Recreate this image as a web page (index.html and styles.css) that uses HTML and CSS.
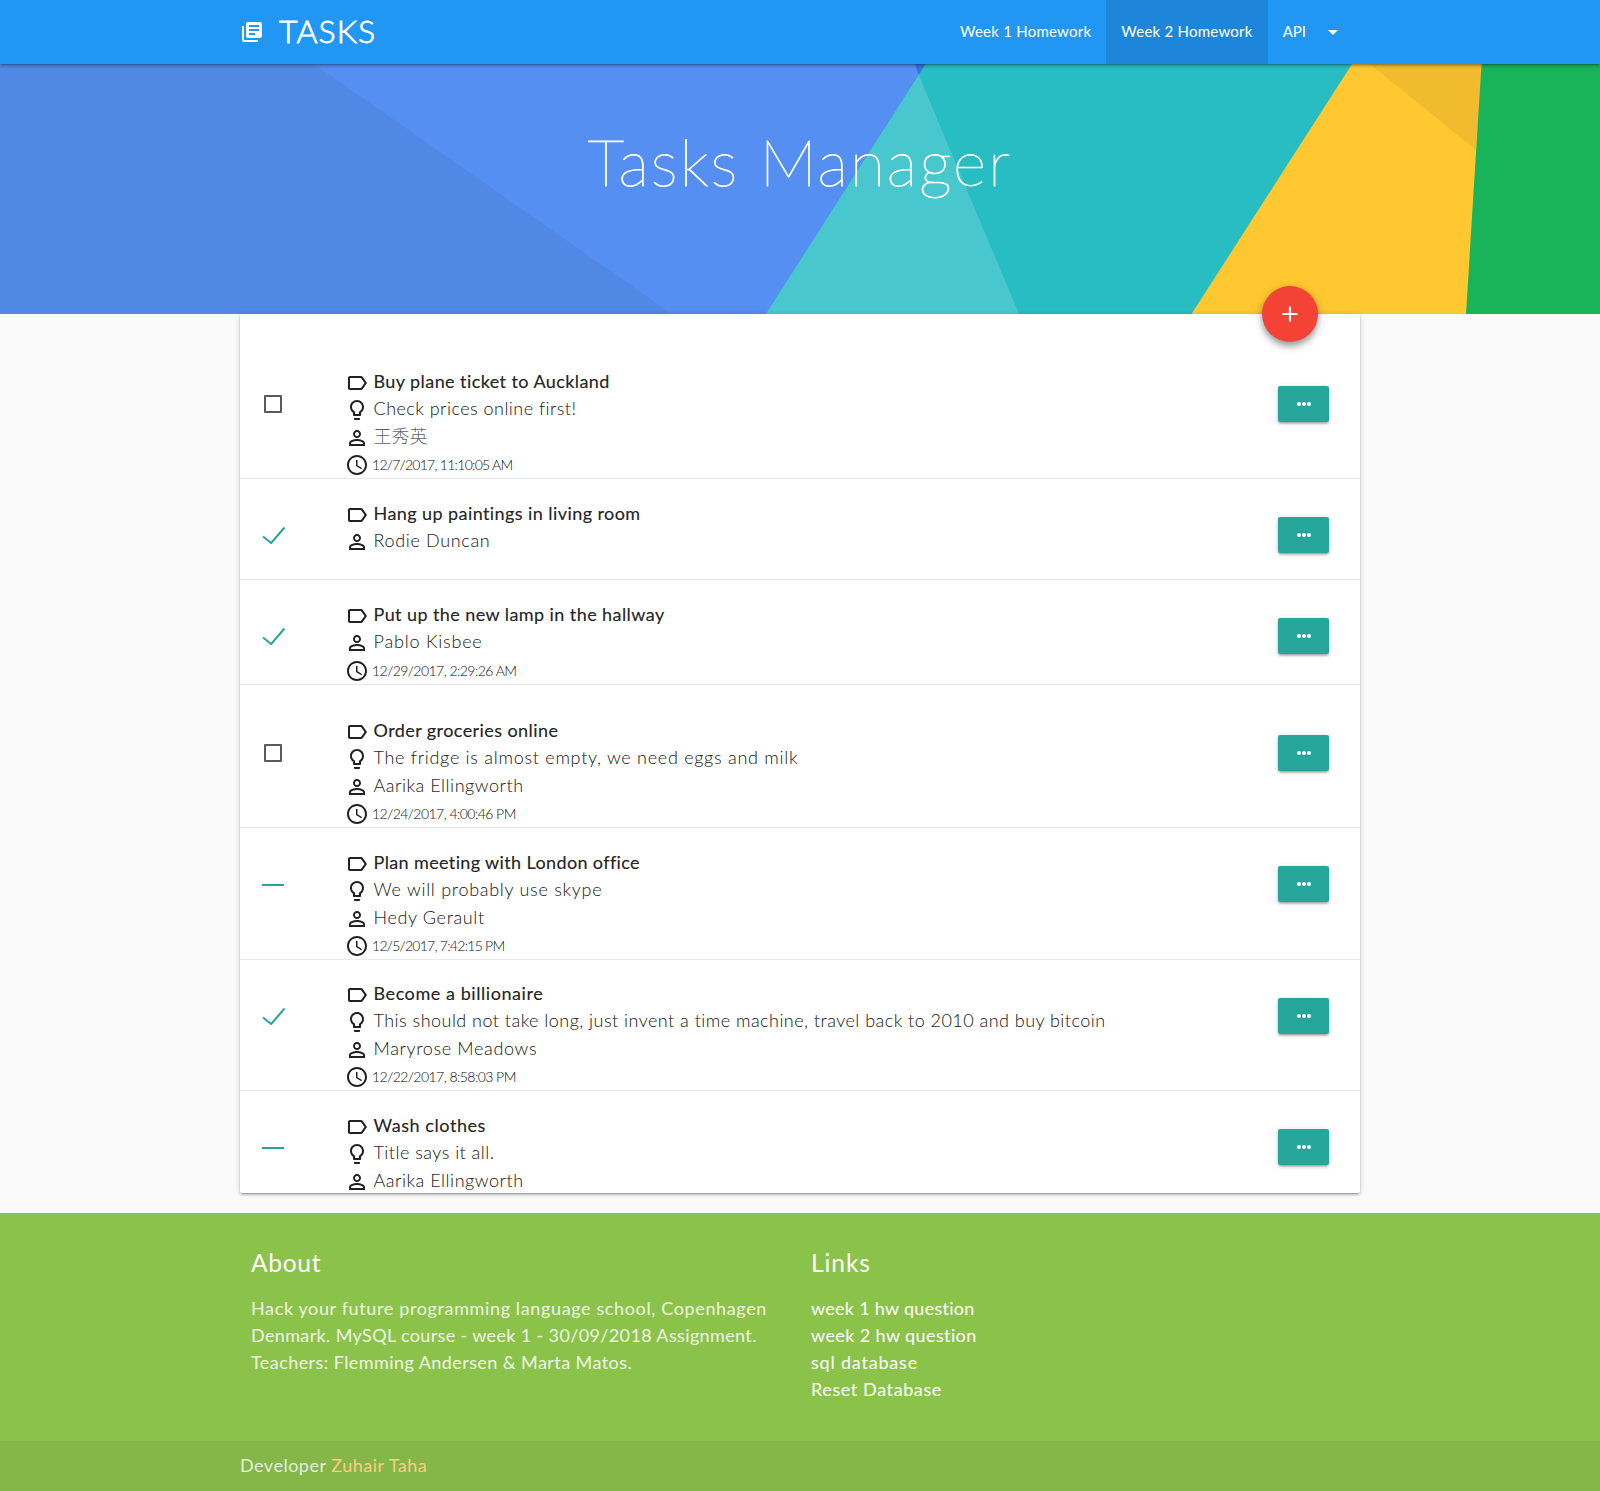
FILE: index.html
```html
<!DOCTYPE html>
<html lang="en">
<head>
<meta charset="utf-8">
<title>Tasks Manager</title>
<link rel="stylesheet" href="styles.css">
</head>
<body>
<svg class="defs" aria-hidden="true">
  <symbol id="label" viewBox="0 0 24 24"><path d="M17.63 5.84C17.27 5.33 16.67 5 16 5L5 5.01C3.9 5.01 3 5.9 3 7v10c0 1.1.9 1.99 2 1.99L16 19c.67 0 1.27-.33 1.63-.84L22 12l-4.37-6.16zM16 17H5V7h11l3.55 5L16 17z"/></symbol>
  <symbol id="bulb" viewBox="0 0 24 24"><path d="M9 21c0 .55.45 1 1 1h4c.55 0 1-.45 1-1v-1H9v1zm3-19C8.14 2 5 5.14 5 9c0 2.38 1.19 4.47 3 5.74V17c0 .55.45 1 1 1h6c.55 0 1-.45 1-1v-2.26c1.81-1.27 3-3.36 3-5.74 0-3.86-3.14-7-7-7zm2.85 11.1l-.85.6V16h-4v-2.3l-.85-.6C7.8 12.16 7 10.63 7 9c0-2.76 2.24-5 5-5s5 2.24 5 5c0 1.63-.8 3.16-2.15 4.1z"/></symbol>
  <symbol id="person" viewBox="0 0 24 24"><path d="M12 5.9c1.16 0 2.1.94 2.1 2.1s-.94 2.1-2.1 2.1S9.9 9.16 9.9 8s.94-2.1 2.1-2.1m0 9c2.97 0 6.1 1.46 6.1 2.1v1.1H5.900V17c0-.64 3.130-2.100 6.100-2.100M12 4C9.790 4 8 5.790 8 8s1.790 4 4 4 4-1.790 4-4-1.790-4-4-4zm0 9c-2.670 0-8 1.340-8 4v3h16v-3c0-2.660-5.330-4-8-4z"/></symbol>
  <symbol id="clock" viewBox="0 0 24 24"><path d="M11.990 2C6.470 2 2 6.480 2 12s4.470 10 9.990 10C17.520 22 22 17.520 22 12S17.520 2 11.990 2zM12 20c-4.420 0-8-3.580-8-8s3.580-8 8-8 8 3.580 8 8-3.580 8-8 8z"/><path d="M12.500 7H11v6l5.250 3.150.750-1.230-4.500-2.670z"/></symbol>
  <symbol id="dots" viewBox="0 0 14 4"><circle cx="2" cy="2" r="2"/><circle cx="7" cy="2" r="2"/><circle cx="12" cy="2" r="2"/></symbol>
  <symbol id="check" viewBox="0 0 24 18"><path d="M1 10.500L9.200 17L22.500 1.500" fill="none" stroke="#26a69a" stroke-width="2"/></symbol>
</svg>

<nav class="nav">
  <div class="container nav-row">
    <a class="brand">
      <svg viewBox="0 0 24 24"><path d="M4 6H2v14c0 1.100.900 2 2 2h14v-2H4V6zm16-4H8c-1.100 0-2 .900-2 2v12c0 1.100.900 2 2 2h12c1.100 0 2-.900 2-2V4c0-1.100-.900-2-2-2zm-1 9H9V9h10v2zm-4 4H9v-2h6v2zm4-8H9V5h10v2z"/></svg>
      <span>TASKS</span>
    </a>
    <ul class="menu">
      <li><a>Week 1 Homework</a></li>
      <li class="active"><a>Week 2 Homework</a></li>
      <li><a class="api">API<svg viewBox="0 0 24 24"><path d="M7 10l5 5 5-5z"/></svg></a></li>
    </ul>
  </div>
</nav>

<header class="hero">
  <svg class="hero-art" viewBox="0 0 1600 250" preserveAspectRatio="none">
    <rect width="1600" height="250" fill="#558ff2"/>
    <path d="M0 0H314L672 250H0z" fill="#5188e5"/>
    <path d="M925.500 0H1600V250H766z" fill="#28bcc3"/>
    <path d="M915 0H925.500L918.700 11z" fill="#2e74dc"/>
    <path d="M918.700 11L1019 250H766z" fill="#49c7ce"/>
    <path d="M1352 0H1600V250H1191.500z" fill="#ffc730"/>
    <path d="M1370 0H1481L1476 86z" fill="#f0bb2e"/>
    <path d="M1481.500 0H1600V250H1466z" fill="#19b35a"/>
  </svg>
  <h1>Tasks Manager</h1>
</header>

<main class="container card">
  <button class="fab" aria-label="Add"><svg viewBox="0 0 24 24"><path d="M19 13h-6v6h-2v-6H5v-2h6V5h2v6h6v2z"/></svg></button>
  <section class="task first">
    <div class="state"><i class="box"></i></div>
    <div class="lines">
      <p class="title"><svg><use href="#label"/></svg>Buy plane ticket to Auckland</p>
      <p class="desc"><svg><use href="#bulb"/></svg>Check prices online first!</p>
      <p class="name cjk"><svg><use href="#person"/></svg>王秀英</p>
      <p class="time"><svg><use href="#clock"/></svg>12/7/2017, 11:10:05 AM</p>
    </div>
    <button class="more"><svg><use href="#dots"/></svg></button>
  </section>
  <section class="task short">
    <div class="state"><svg><use href="#check"/></svg></div>
    <div class="lines">
      <p class="title"><svg><use href="#label"/></svg>Hang up paintings in living room</p>
      <p class="name"><svg><use href="#person"/></svg>Rodie Duncan</p>
    </div>
    <button class="more"><svg><use href="#dots"/></svg></button>
  </section>
  <section class="task dated">
    <div class="state"><svg><use href="#check"/></svg></div>
    <div class="lines">
      <p class="title"><svg><use href="#label"/></svg>Put up the new lamp in the hallway</p>
      <p class="name"><svg><use href="#person"/></svg>Pablo Kisbee</p>
      <p class="time"><svg><use href="#clock"/></svg>12/29/2017, 2:29:26 AM</p>
    </div>
    <button class="more"><svg><use href="#dots"/></svg></button>
  </section>
  <section class="task roomy">
    <div class="state"><i class="box"></i></div>
    <div class="lines">
      <p class="title"><svg><use href="#label"/></svg>Order groceries online</p>
      <p class="desc"><svg><use href="#bulb"/></svg>The fridge is almost empty, we need eggs and milk</p>
      <p class="name"><svg><use href="#person"/></svg>Aarika Ellingworth</p>
      <p class="time"><svg><use href="#clock"/></svg>12/24/2017, 4:00:46 PM</p>
    </div>
    <button class="more"><svg><use href="#dots"/></svg></button>
  </section>
  <section class="task full">
    <div class="state"><i class="dash"></i></div>
    <div class="lines">
      <p class="title"><svg><use href="#label"/></svg>Plan meeting with London office</p>
      <p class="desc"><svg><use href="#bulb"/></svg>We will probably use skype</p>
      <p class="name"><svg><use href="#person"/></svg>Hedy Gerault</p>
      <p class="time"><svg><use href="#clock"/></svg>12/5/2017, 7:42:15 PM</p>
    </div>
    <button class="more"><svg><use href="#dots"/></svg></button>
  </section>
  <section class="task full">
    <div class="state"><svg><use href="#check"/></svg></div>
    <div class="lines">
      <p class="title"><svg><use href="#label"/></svg>Become a billionaire</p>
      <p class="desc"><svg><use href="#bulb"/></svg>This should not take long, just invent a time machine, travel back to 2010 and buy bitcoin</p>
      <p class="name"><svg><use href="#person"/></svg>Maryrose Meadows</p>
      <p class="time"><svg><use href="#clock"/></svg>12/22/2017, 8:58:03 PM</p>
    </div>
    <button class="more"><svg><use href="#dots"/></svg></button>
  </section>
  <section class="task last">
    <div class="state"><i class="dash"></i></div>
    <div class="lines">
      <p class="title"><svg><use href="#label"/></svg>Wash clothes</p>
      <p class="desc"><svg><use href="#bulb"/></svg>Title says it all.</p>
      <p class="name"><svg><use href="#person"/></svg>Aarika Ellingworth</p>
    </div>
    <button class="more"><svg><use href="#dots"/></svg></button>
  </section>
</main>

<footer class="footer">
  <div class="container columns">
    <div class="about">
      <h2>About</h2>
      <p>Hack your future programming language school, Copenhagen</p>
      <p>Denmark. MySQL course - week 1 - 30/09/2018 Assignment.</p>
      <p>Teachers: Flemming Andersen &amp; Marta Matos.</p>
    </div>
    <div class="links">
      <h2>Links</h2>
      <p>week 1 hw question</p>
      <p>week 2 hw question</p>
      <p>sql database</p>
      <p>Reset Database</p>
    </div>
  </div>
  <div class="copyright"><div class="container"><span class="dev">Developer</span> <a>Zuhair Taha</a></div></div>
</footer>
</body>
</html>
```

FILE: styles.css
```css
* { box-sizing: border-box; }
body {
  margin: 0;
  background: #fafafa;
  color: rgba(0, 0, 0, .87);
  font: 400 18px/27px Lato, "Noto Sans CJK SC", sans-serif;
  font-variant-ligatures: none;
}
h1, h2, p, ul { margin: 0; padding: 0; font-weight: 400; }
svg { fill: currentColor; display: block; flex: none; }
button { border: 0; padding: 0; color: #fff; display: flex; align-items: center; justify-content: center; }
.defs { display: none; }
.container { width: 1120px; margin: 0 auto; }

/* Navigation bar */
.nav {
  position: relative;
  z-index: 2;
  height: 64px;
  background: #2196f3;
  color: #fff;
  box-shadow: 0 2px 2px 0 rgba(0,0,0,.14), 0 3px 1px -2px rgba(0,0,0,.12), 0 1px 5px 0 rgba(0,0,0,.2);
}
.nav-row { display: flex; justify-content: space-between; height: 64px; }
.brand { display: flex; gap: 15px; font-size: 32px; line-height: 62px; }
.brand svg { width: 24px; height: 24px; margin-top: 20px; }
.brand span { font-weight: 300; -webkit-text-stroke: .8px #fff; letter-spacing: 1.100px; }
.menu { display: flex; list-style: none; font-size: 15px; line-height: 62px; }
.menu li { padding: 0 15px; letter-spacing: .24px; }
.menu .active { background: rgba(0, 0, 0, .1); }
.api { display: flex; gap: 15px; letter-spacing: 0; }
.api svg { width: 24px; height: 24px; margin-top: 20px; }

/* Hero */
.hero { position: relative; height: 250px; text-align: center; }
.hero-art { position: absolute; inset: 0; width: 100%; height: 100%; }
.hero h1 {
  position: relative;
  padding-top: 63px;
  font-size: 64px;
  line-height: 70px;
  font-weight: 100;
  letter-spacing: 2.100px;
  color: #fff;
  -webkit-text-stroke: .9px #fff;
}

/* Task list */
.card {
  position: relative;
  height: 879px;
  background: #fff;
  border-radius: 2px;
  box-shadow: 0 2px 2px 0 rgba(0,0,0,.14), 0 3px 1px -2px rgba(0,0,0,.12), 0 1px 5px 0 rgba(0,0,0,.2);
}
.fab {
  position: absolute;
  right: 42px;
  top: -28px;
  width: 56px;
  height: 56px;
  border-radius: 50%;
  background: #f44336;
  box-shadow: 0 4px 5px 0 rgba(0,0,0,.14), 0 1px 10px 0 rgba(0,0,0,.12), 0 5px 10px -1px rgba(0,0,0,.25);
}
.fab svg { width: 26px; height: 26px; }
.task { display: flex; height: 131px; padding: 24px 31px 0 22px; border-bottom: 1px solid #e9e9e9; }
.first { height: 165px; padding-top: 57px; }
.short { height: 101px; }
.dated { height: 105px; }
.roomy { height: 143px; padding-top: 35px; }
.full:nth-of-type(5) { height: 132px; }
.full:nth-of-type(6) { padding-top: 23px; }
.last { height: 102px; border: 0; }
.state { width: 82.500px; height: 36px; margin-top: 15px; display: flex; align-items: center; }
.state svg { width: 24px; height: 18px; }
.box { width: 18px; height: 18px; margin-left: 2px; border: 2px solid #5a5a5a; border-radius: 1px; }
.dash { width: 22px; height: 2px; background: #26a69a; }
.lines { flex: 1; }
.lines p { display: flex; align-items: flex-start; gap: 5px; height: 27.400px; line-height: 20px; white-space: nowrap; }
.lines p svg { width: 24px; height: 24px; color: #212121; }
.title { letter-spacing: .42px; -webkit-text-stroke: .2px currentColor; }
.desc, .name, .time { font-weight: 300; -webkit-text-stroke: .12px currentColor; }
.desc { letter-spacing: .47px; }
.name { letter-spacing: .65px; }
.lines .time { gap: 3.500px; line-height: 23px; font-size: 14px; letter-spacing: -.55px; }
.lines .cjk { letter-spacing: 0; line-height: 21px; color: rgba(0, 0, 0, .65); -webkit-text-stroke: 0; }
.task:nth-of-type(1) .time, .task:nth-of-type(5) .time { letter-spacing: -.73px; }
.task:nth-of-type(6) .title, .task:nth-of-type(7) .title { letter-spacing: .56px; }
.task:nth-of-type(5) .title { letter-spacing: .37px; }
.task:nth-of-type(4) .desc, .task:nth-of-type(5) .desc { letter-spacing: .72px; }
.task:nth-of-type(3) .name { letter-spacing: .8px; }
.task:nth-of-type(4) .name, .task:nth-of-type(7) .name { letter-spacing: .53px; }
.more {
  width: 51px;
  height: 36px;
  margin-top: 15px;
  border-radius: 2px;
  background: #26a69a;
  box-shadow: 0 2px 2px 0 rgba(0,0,0,.14), 0 3px 1px -2px rgba(0,0,0,.12), 0 1px 5px 0 rgba(0,0,0,.2);
}
.more svg { width: 14px; height: 4px; }
.short .state, .dated .state, .short .more, .dated .more, .full:nth-of-type(5) .more, .last .more { margin-top: 14px; }

/* Footer */
.footer { margin-top: 20px; background: #8bc34a; color: #fff; }
.columns { display: flex; height: 228px; padding: 34px 11px 0; }
.about { width: 560px; }
h2 { font-size: 24.600px; line-height: 32px; margin-bottom: 16px; letter-spacing: .65px; }
.links h2 { letter-spacing: .9px; }
.footer p { line-height: 27px; white-space: nowrap; }
.about p { color: #eef6e3; letter-spacing: .63px; }
.about p:nth-of-type(2) { letter-spacing: .36px; }
.about p:nth-of-type(3) { letter-spacing: .43px; }
.links p { letter-spacing: .28px; }
.links p:nth-of-type(2) { letter-spacing: .39px; }
.links p:nth-of-type(3) { letter-spacing: .8px; }
.links p:nth-of-type(4) { letter-spacing: .6px; }
.copyright { height: 50px; line-height: 49px; background: rgba(51, 51, 51, .08); color: rgba(255, 255, 255, .8); letter-spacing: .5px; }
.copyright a { color: #ffcc80; }
```
